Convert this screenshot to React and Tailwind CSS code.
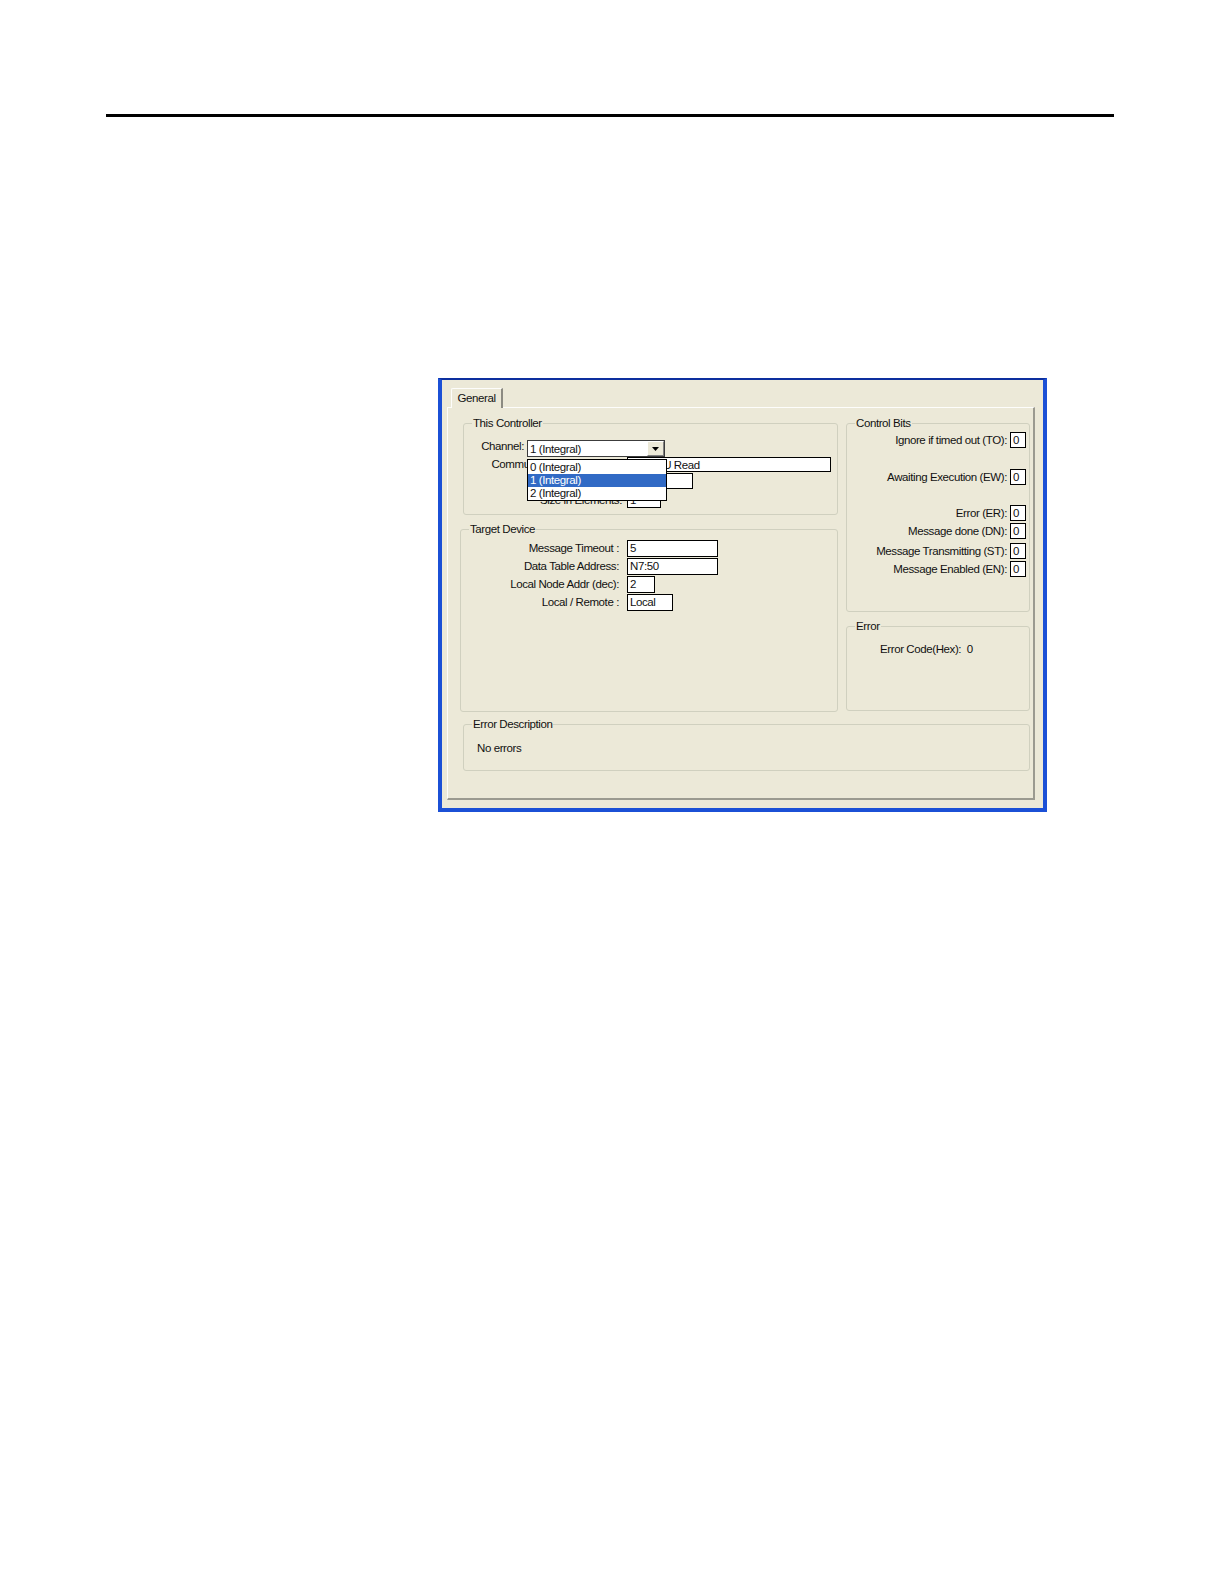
import clsx from 'clsx'

function Group({ label, className, children }) {
  return (
    <div className={clsx('relative border border-[#d0d0bf] rounded-[3px]', className)}>
      <span className="absolute -top-[7px] left-[8px] bg-[#ece9d8] px-[1px] leading-[13px] whitespace-nowrap">
        {label}
      </span>
      {children}
    </div>
  )
}

function Field({ value, className }) {
  return (
    <div className={clsx('bg-white border border-black leading-[14px] pl-[2px] whitespace-nowrap overflow-hidden', className)}>
      {value}
    </div>
  )
}

function Bit({ label, className }) {
  return (
    <div className={clsx('flex items-center justify-end gap-[3px]', className)}>
      <span className="leading-[13px] whitespace-nowrap">{label}</span>
      <Field value="0" className="w-[16px] h-[16px]" />
    </div>
  )
}

function TargetRow({ label, value, width }) {
  return (
    <div className="flex items-center gap-[8px]">
      <span className="w-[158px] text-right leading-[13px] whitespace-nowrap">{label}</span>
      <Field value={value} className={clsx('h-[17px] leading-[15px]', width)} />
    </div>
  )
}

export default function App() {
  return (
    <div className="w-[1224px] h-[1584px] bg-white overflow-hidden font-['Liberation_Sans',Arial,sans-serif] text-[11.5px] tracking-[-0.4px] text-[#111]">
      {/* page rule */}
      <div className="ml-[106px] mt-[114px] w-[1008px] h-[3px] bg-black" />

      {/* dialog */}
      <div className="ml-[438px] mt-[261px] w-[609px] h-[434px] border-t-2 border-t-[#0d2f9e] border-x-4 border-b-4 border-x-[#1b50d6] border-b-[#1b50d6] bg-[#ece9d8]">
        {/* tab strip */}
        <div className="pt-[8px] pl-[9px] flex">
          <div className="relative z-10 -mb-[1px] w-[52px] h-[20px] bg-[#ece9d8] border-t border-l border-[#fdfdfb] border-r-2 border-r-[#8c8b82] rounded-tl-[2px] flex items-center justify-center leading-[13px]">
            General
          </div>
        </div>

        {/* tab page */}
        <div className="ml-[5px] w-[588px] h-[393px] border-t border-l border-[#fdfdfb] border-r-2 border-b-2 border-r-[#9b9a90] border-b-[#9b9a90] pt-[15px]">
          <div className="flex gap-[8px] ml-[12px]">
            {/* left column */}
            <div className="w-[378px] flex flex-col gap-[14px]">
              <Group label="This Controller" className="ml-[3px] w-[375px] h-[92px]">
                <div className="pt-[16px] flex flex-col">
                  <div className="flex items-start gap-[3px]">
                    <span className="w-[60px] text-right leading-[13px]">Channel:</span>
                    <div className="relative w-[138px] h-[17px] bg-white border border-[#3c3c3c] flex items-center">
                      <span className="flex-1 pl-[2px] leading-[14px] whitespace-nowrap">1 (Integral)</span>
                      <div className="w-[17px] h-[15px] bg-[#ece9d8] border-t border-l border-t-white border-l-white border-r border-b border-r-[#808080] border-b-[#808080] flex items-center justify-center">
                        <svg width="7" height="4" viewBox="0 0 7 4">
                          <polygon points="0,0 7,0 3.5,4" fill="#000" />
                        </svg>
                      </div>
                      {/* open list */}
                      <div className="absolute z-20 left-[-1px] top-[18px] w-[140px] h-[42px] bg-white border border-black flex flex-col pt-[1px]">
                        <div className="h-[13px] leading-[13px] pl-[2px]">0 (Integral)</div>
                        <div className="h-[13px] leading-[13px] pl-[2px] bg-[#316ac5] text-white">1 (Integral)</div>
                        <div className="h-[13px] leading-[13px] pl-[2px]">2 (Integral)</div>
                      </div>
                    </div>
                  </div>
                  <div className="flex items-center gap-[5px]">
                    <span className="w-[158px] text-right leading-[13px] whitespace-nowrap">Communication Command:</span>
                    <Field value="500CPU Read" className="w-[204px] h-[15px] leading-[13px]" />
                  </div>
                  <div className="flex items-center gap-[5px] mt-[1px]">
                    <span className="w-[158px] text-right leading-[13px] whitespace-nowrap">Data Table Address:</span>
                    <Field value="N7:0" className="w-[66px] h-[16px]" />
                  </div>
                  <div className="flex items-center gap-[5px] mt-[3px]">
                    <span className="w-[158px] text-right leading-[13px] whitespace-nowrap">Size in Elements:</span>
                    <Field value="1" className="w-[34px] h-[16px]" />
                  </div>
                </div>
              </Group>

              <Group label="Target Device" className="w-[378px] h-[183px]">
                <div className="pt-[10px] flex flex-col gap-[1px]">
                  <TargetRow label="Message Timeout :" value="5" width="w-[91px]" />
                  <TargetRow label="Data Table Address:" value="N7:50" width="w-[91px]" />
                  <TargetRow label="Local Node Addr (dec):" value="2" width="w-[28px]" />
                  <TargetRow label="Local / Remote :" value="Local" width="w-[46px]" />
                </div>
              </Group>
            </div>

            {/* right column */}
            <div className="w-[184px] flex flex-col gap-[14px]">
              <Group label="Control Bits" className="h-[189px]">
                <div className="pt-[8px] pr-[3px] flex flex-col">
                  <Bit label="Ignore if timed out (TO):" />
                  <Bit label="Awaiting Execution (EW):" className="mt-[21px]" />
                  <Bit label="Error (ER):" className="mt-[20px]" />
                  <Bit label="Message done (DN):" className="mt-[2px]" />
                  <Bit label="Message Transmitting (ST):" className="mt-[4px]" />
                  <Bit label="Message Enabled (EN):" className="mt-[2px]" />
                </div>
              </Group>

              <Group label="Error" className="h-[85px]">
                <div className="pt-[16px] pl-[33px] leading-[13px] whitespace-nowrap">
                  Error Code(Hex):&nbsp;&nbsp;0
                </div>
              </Group>
            </div>
          </div>

          <Group label="Error Description" className="mt-[12px] ml-[15px] w-[567px] h-[47px]">
            <div className="pt-[17px] pl-[13px] leading-[13px]">No errors</div>
          </Group>
        </div>
      </div>
    </div>
  )
}
